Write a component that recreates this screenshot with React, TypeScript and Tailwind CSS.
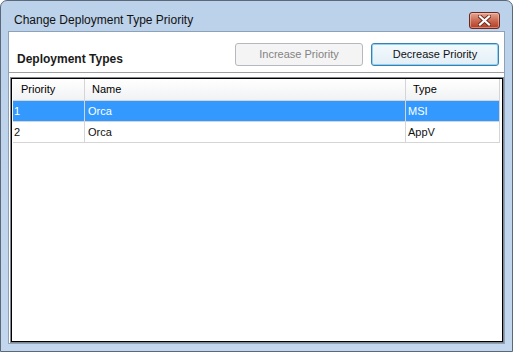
const rows = [
  { priority: '1', name: 'Orca', type: 'MSI', selected: true },
  { priority: '2', name: 'Orca', type: 'AppV', selected: false },
]

function CloseButton() {
  return (
    <div className="flex h-[17px] w-[31px] items-center justify-center rounded-[3px] border border-[#6a2a20] bg-gradient-to-b from-[#e3a593] via-[#cc6a52] to-[#b33a22] shadow-[inset_0_0_0_1px_rgba(255,220,210,0.45)]">
      <svg width="13" height="11" viewBox="0 0 13 11">
        <path d="M2 1.5 L11 9.5 M11 1.5 L2 9.5" stroke="#6b2b20" strokeWidth="4" strokeLinecap="square" />
        <path d="M2 1.5 L11 9.5 M11 1.5 L2 9.5" stroke="#ffffff" strokeWidth="2.2" strokeLinecap="square" />
      </svg>
    </div>
  )
}

export default function App() {
  return (
    <div
      className="flex h-[352px] w-[513px] flex-col rounded-t-[7px] border border-[#5b6878] bg-gradient-to-b from-[#bcd2ea] to-[#c2d7ee] text-black"
      style={{ fontFamily: '"Liberation Sans", Arial, sans-serif' }}
    >
      {/* Title bar */}
      <div className="flex h-[30px] shrink-0 items-start justify-between pl-[13px] pr-[12px]">
        <span className="mt-[13px] text-[12px] leading-none text-[#111]">Change Deployment Type Priority</span>
        <div className="mt-[11px]">
          <CloseButton />
        </div>
      </div>

      {/* Client area */}
      <div className="mx-[7px] mb-[7px] flex flex-1 flex-col border border-[#8da2b8] bg-white">
        {/* Top panel */}
        <div className="flex h-[40px] shrink-0 items-end justify-between pl-[8px] pr-[5px] pb-[6px]">
          <span className="text-[12px] font-bold leading-[14px] text-[#1b1b1b]">Deployment Types</span>
          <div className="flex gap-[8px]">
            <button className="h-[23px] w-[128px] rounded-[3px] border border-[#b5b9bd] bg-[#f4f4f4] text-[11px] text-[#838383]">
              Increase Priority
            </button>
            <button className="h-[23px] w-[128px] rounded-[3px] border border-[#3c7fb1] bg-gradient-to-b from-[#f4fafd] to-[#e2eef6] text-[11px] text-[#111] shadow-[inset_0_0_0_1px_#8fd3f4]">
              Decrease Priority
            </button>
          </div>
        </div>
        <div className="h-px shrink-0 bg-[#a0a0a0]" />
        <div className="h-[4px] shrink-0" />

        {/* Grid */}
        <div className="ml-[1px] flex flex-1 flex-col border border-[#828790]">
          <div className="flex flex-1 flex-col border border-black pl-[1px]">
            <div className="grid grid-cols-[72px_321px_94px] text-[11px] leading-none">
              <div className="flex h-[22px] items-center border-r border-b border-[#d5d5d5] bg-gradient-to-b from-[#ffffff] to-[#f1f2f4] pl-[8px]">Priority</div>
              <div className="flex h-[22px] items-center border-r border-b border-[#d5d5d5] bg-gradient-to-b from-[#ffffff] to-[#f1f2f4] pl-[7px]">Name</div>
              <div className="flex h-[22px] items-center border-r border-b border-[#d5d5d5] bg-gradient-to-b from-[#ffffff] to-[#f1f2f4] pl-[7px]">Type</div>
              {rows.map((r) => (
                <>
                  <div key={r.priority + 'p'} className={`flex h-[21px] items-center border-r border-b border-[#d5d5d5] pl-[1px] ${r.selected ? 'bg-[#3399ff] text-white' : 'text-[#111]'}`}>{r.priority}</div>
                  <div key={r.priority + 'n'} className={`flex h-[21px] items-center border-r border-b border-[#d5d5d5] pl-[3px] ${r.selected ? 'bg-[#3399ff] text-white' : 'text-[#111]'}`}>{r.name}</div>
                  <div key={r.priority + 't'} className={`flex h-[21px] items-center border-r border-b border-[#d5d5d5] pl-[2px] ${r.selected ? 'bg-[#3399ff] text-white' : 'text-[#111]'}`}>{r.type}</div>
                </>
              ))}
            </div>
          </div>
        </div>
      </div>
    </div>
  )
}
